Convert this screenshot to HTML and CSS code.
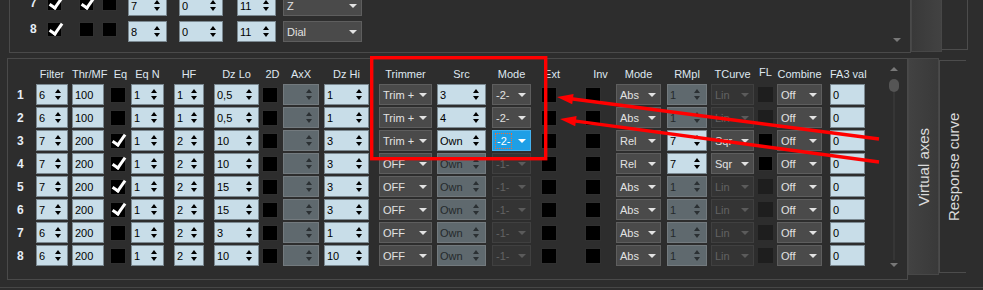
FILE: index.html
```html
<!DOCTYPE html>
<html lang="en">
<head>
  <meta charset="UTF-8">
  <meta name="viewport" content="width=device-width, initial-scale=1.0">
  <title>Axis settings</title>
  <link rel="stylesheet" href="styles.css">
</head>
<body>
  <!-- upper block, scrolled so only rows 7 and 8 show -->
  <div class="strip top">
    <div class="panel upper">
      <div class="ugrid">
        <div class="n">7</div>
        <div class="cb on"></div>
        <div class="cb on"></div>
        <div class="cb"></div>
        <div class="sp"><span>7</span><i class="ar"></i></div>
        <div class="sp"><span>0</span><i class="ar"></i></div>
        <div class="sp"><span>11</span><i class="ar"></i></div>
        <div class="dd"><span>Z</span><i class="dn"></i></div>

        <div class="n">8</div>
        <div class="cb on"></div>
        <div class="cb"></div>
        <div class="cb"></div>
        <div class="sp"><span>8</span><i class="ar"></i></div>
        <div class="sp"><span>0</span><i class="ar"></i></div>
        <div class="sp"><span>11</span><i class="ar"></i></div>
        <div class="dd"><span>Dial</span><i class="dn"></i></div>
      </div>
      <i class="down corner"></i>
    </div>
    <div class="tab lit short"></div>
    <div class="tab plain shorter"></div>
  </div>

  <!-- axis table -->
  <div class="strip bottom">
    <div class="panel lower">
      <div class="grid">
        <div></div>
        <div class="h">Filter</div>
        <div class="h">Thr/MF</div>
        <div class="h">Eq</div>
        <div class="h">Eq N</div>
        <div class="h">HF</div>
        <div class="h">Dz Lo</div>
        <div class="h">2D</div>
        <div class="h">AxX</div>
        <div class="h">Dz Hi</div>
        <div class="h">Trimmer</div>
        <div class="h">Src</div>
        <div class="h">Mode</div>
        <div class="h ext">Ext</div>
        <div class="h">Inv</div>
        <div class="h">Mode</div>
        <div class="h">RMpl</div>
        <div class="h">TCurve</div>
        <div class="h">FL</div>
        <div class="h">Combine</div>
        <div class="h">FA3 val</div>

        <!-- 1 -->
        <div class="n">1</div>
        <div class="sp"><span>6</span><i class="ar"></i></div>
        <div class="tx">100</div>
        <div class="cb"></div>
        <div class="sp"><span>1</span><i class="ar"></i></div>
        <div class="sp"><span>1</span><i class="ar"></i></div>
        <div class="sp"><span>0,5</span><i class="ar"></i></div>
        <div class="cb"></div>
        <div class="sp off"><span></span><i class="ar"></i></div>
        <div class="sp"><span>1</span><i class="ar"></i></div>
        <div class="dd"><span>Trim +</span><i class="dn"></i></div>
        <div class="sp"><span>3</span><i class="ar"></i></div>
        <div class="dd"><span>-2-</span><i class="dn"></i></div>
        <div class="cb"></div>
        <div class="cb"></div>
        <div class="dd"><span>Abs</span><i class="dn"></i></div>
        <div class="sp off"><span>1</span><i class="ar"></i></div>
        <div class="dd off"><span>Lin</span><i class="dn"></i></div>
        <div class="cb dim"></div>
        <div class="dd"><span>Off</span><i class="dn"></i></div>
        <div class="tx">0</div>

        <!-- 2 -->
        <div class="n">2</div>
        <div class="sp"><span>6</span><i class="ar"></i></div>
        <div class="tx">100</div>
        <div class="cb"></div>
        <div class="sp"><span>1</span><i class="ar"></i></div>
        <div class="sp"><span>1</span><i class="ar"></i></div>
        <div class="sp"><span>0,5</span><i class="ar"></i></div>
        <div class="cb"></div>
        <div class="sp off"><span></span><i class="ar"></i></div>
        <div class="sp"><span>1</span><i class="ar"></i></div>
        <div class="dd"><span>Trim +</span><i class="dn"></i></div>
        <div class="sp"><span>4</span><i class="ar"></i></div>
        <div class="dd"><span>-2-</span><i class="dn"></i></div>
        <div class="cb"></div>
        <div class="cb"></div>
        <div class="dd"><span>Abs</span><i class="dn"></i></div>
        <div class="sp off"><span>1</span><i class="ar"></i></div>
        <div class="dd off"><span>Lin</span><i class="dn"></i></div>
        <div class="cb dim"></div>
        <div class="dd"><span>Off</span><i class="dn"></i></div>
        <div class="tx">0</div>

        <!-- 3 -->
        <div class="n">3</div>
        <div class="sp"><span>7</span><i class="ar"></i></div>
        <div class="tx">200</div>
        <div class="cb on"></div>
        <div class="sp"><span>1</span><i class="ar"></i></div>
        <div class="sp"><span>2</span><i class="ar"></i></div>
        <div class="sp"><span>10</span><i class="ar"></i></div>
        <div class="cb"></div>
        <div class="sp off"><span></span><i class="ar"></i></div>
        <div class="sp"><span>3</span><i class="ar"></i></div>
        <div class="dd"><span>Trim +</span><i class="dn"></i></div>
        <div class="sp"><span>Own</span><i class="ar"></i></div>
        <div class="dd sel"><span>-2-</span><i class="dn"></i></div>
        <div class="cb"></div>
        <div class="cb"></div>
        <div class="dd"><span>Rel</span><i class="dn"></i></div>
        <div class="sp"><span>7</span><i class="ar"></i></div>
        <div class="dd"><span>Sqr</span><i class="dn"></i></div>
        <div class="cb"></div>
        <div class="dd"><span>Off</span><i class="dn"></i></div>
        <div class="tx">0</div>

        <!-- 4 -->
        <div class="n">4</div>
        <div class="sp"><span>7</span><i class="ar"></i></div>
        <div class="tx">200</div>
        <div class="cb on"></div>
        <div class="sp"><span>1</span><i class="ar"></i></div>
        <div class="sp"><span>2</span><i class="ar"></i></div>
        <div class="sp"><span>10</span><i class="ar"></i></div>
        <div class="cb"></div>
        <div class="sp off"><span></span><i class="ar"></i></div>
        <div class="sp"><span>3</span><i class="ar"></i></div>
        <div class="dd"><span>OFF</span><i class="dn"></i></div>
        <div class="sp off"><span>Own</span><i class="ar"></i></div>
        <div class="dd off"><span>-1-</span><i class="dn"></i></div>
        <div class="cb"></div>
        <div class="cb"></div>
        <div class="dd"><span>Rel</span><i class="dn"></i></div>
        <div class="sp"><span>7</span><i class="ar"></i></div>
        <div class="dd"><span>Sqr</span><i class="dn"></i></div>
        <div class="cb"></div>
        <div class="dd"><span>Off</span><i class="dn"></i></div>
        <div class="tx">0</div>

        <!-- 5 -->
        <div class="n">5</div>
        <div class="sp"><span>7</span><i class="ar"></i></div>
        <div class="tx">200</div>
        <div class="cb on"></div>
        <div class="sp"><span>1</span><i class="ar"></i></div>
        <div class="sp"><span>2</span><i class="ar"></i></div>
        <div class="sp"><span>15</span><i class="ar"></i></div>
        <div class="cb"></div>
        <div class="sp off"><span></span><i class="ar"></i></div>
        <div class="sp"><span>3</span><i class="ar"></i></div>
        <div class="dd"><span>OFF</span><i class="dn"></i></div>
        <div class="sp off"><span>Own</span><i class="ar"></i></div>
        <div class="dd off"><span>-1-</span><i class="dn"></i></div>
        <div class="cb"></div>
        <div class="cb"></div>
        <div class="dd"><span>Abs</span><i class="dn"></i></div>
        <div class="sp off"><span>1</span><i class="ar"></i></div>
        <div class="dd off"><span>Lin</span><i class="dn"></i></div>
        <div class="cb dim"></div>
        <div class="dd"><span>Off</span><i class="dn"></i></div>
        <div class="tx">0</div>

        <!-- 6 -->
        <div class="n">6</div>
        <div class="sp"><span>7</span><i class="ar"></i></div>
        <div class="tx">200</div>
        <div class="cb on"></div>
        <div class="sp"><span>1</span><i class="ar"></i></div>
        <div class="sp"><span>2</span><i class="ar"></i></div>
        <div class="sp"><span>15</span><i class="ar"></i></div>
        <div class="cb"></div>
        <div class="sp off"><span></span><i class="ar"></i></div>
        <div class="sp"><span>3</span><i class="ar"></i></div>
        <div class="dd"><span>OFF</span><i class="dn"></i></div>
        <div class="sp off"><span>Own</span><i class="ar"></i></div>
        <div class="dd off"><span>-1-</span><i class="dn"></i></div>
        <div class="cb"></div>
        <div class="cb"></div>
        <div class="dd"><span>Abs</span><i class="dn"></i></div>
        <div class="sp off"><span>1</span><i class="ar"></i></div>
        <div class="dd off"><span>Lin</span><i class="dn"></i></div>
        <div class="cb dim"></div>
        <div class="dd"><span>Off</span><i class="dn"></i></div>
        <div class="tx">0</div>

        <!-- 7 -->
        <div class="n">7</div>
        <div class="sp"><span>6</span><i class="ar"></i></div>
        <div class="tx">200</div>
        <div class="cb"></div>
        <div class="sp"><span>1</span><i class="ar"></i></div>
        <div class="sp"><span>2</span><i class="ar"></i></div>
        <div class="sp"><span>3</span><i class="ar"></i></div>
        <div class="cb"></div>
        <div class="sp off"><span></span><i class="ar"></i></div>
        <div class="sp"><span>1</span><i class="ar"></i></div>
        <div class="dd"><span>OFF</span><i class="dn"></i></div>
        <div class="sp off"><span>Own</span><i class="ar"></i></div>
        <div class="dd off"><span>-1-</span><i class="dn"></i></div>
        <div class="cb"></div>
        <div class="cb"></div>
        <div class="dd"><span>Abs</span><i class="dn"></i></div>
        <div class="sp off"><span>1</span><i class="ar"></i></div>
        <div class="dd off"><span>Lin</span><i class="dn"></i></div>
        <div class="cb dim"></div>
        <div class="dd"><span>Off</span><i class="dn"></i></div>
        <div class="tx">0</div>

        <!-- 8 -->
        <div class="n">8</div>
        <div class="sp"><span>6</span><i class="ar"></i></div>
        <div class="tx">200</div>
        <div class="cb"></div>
        <div class="sp"><span>1</span><i class="ar"></i></div>
        <div class="sp"><span>2</span><i class="ar"></i></div>
        <div class="sp"><span>10</span><i class="ar"></i></div>
        <div class="cb"></div>
        <div class="sp off"><span></span><i class="ar"></i></div>
        <div class="sp"><span>10</span><i class="ar"></i></div>
        <div class="dd"><span>OFF</span><i class="dn"></i></div>
        <div class="sp off"><span>Own</span><i class="ar"></i></div>
        <div class="dd off"><span>-1-</span><i class="dn"></i></div>
        <div class="cb"></div>
        <div class="cb"></div>
        <div class="dd"><span>Abs</span><i class="dn"></i></div>
        <div class="sp off"><span>1</span><i class="ar"></i></div>
        <div class="dd off"><span>Lin</span><i class="dn"></i></div>
        <div class="cb dim"></div>
        <div class="dd"><span>Off</span><i class="dn"></i></div>
        <div class="tx">0</div>
      </div>

      <div class="scroll">
        <i class="up"></i>
        <div class="thumb"></div>
        <div class="track"></div>
        <i class="down"></i>
      </div>
    </div>
    <div class="tab lit vtab">Virtual axes</div>
    <div class="tab plain vtab inset">Response curve</div>
  </div>

  <div class="base"></div>

  <!-- red annotation drawn over the screenshot -->
  <svg class="marks" width="983" height="290" viewBox="0 0 983 290">
    <rect x="371.7" y="57.7" width="174" height="101" fill="none" stroke="#ff0000" stroke-width="3.4"/>
    <line x1="879" y1="139" x2="571" y2="98.8" stroke="#ff0000" stroke-width="3.4"/>
    <polygon points="557,97 572.2,104.3 573.6,93.9" fill="#ff0000"/>
    <line x1="879" y1="162" x2="574" y2="120.9" stroke="#ff0000" stroke-width="3.4"/>
    <polygon points="560,119 575.2,126.3 576.6,115.9" fill="#ff0000"/>
  </svg>
</body>
</html>
```

FILE: styles.css
```css
html, body {
  margin: 0;
  padding: 0;
}
body {
  position: relative;
  width: 983px;
  height: 290px;
  overflow: hidden;
  background-color: #2d2d2d;
  font-family: "Liberation Sans", Arial, sans-serif;
  font-size: 11px;
  color: #e2e2e2;
}

/* strips: panel + vertical tabs */
.strip {
  display: flex;
  align-items: flex-start;
}
.top {
  padding-left: 9px;
  height: 53px;
}
.bottom {
  padding-left: 7px;
  margin-top: 5px;
}
.panel {
  box-sizing: border-box;
  display: flex;
  border: 1px solid #4a4a4a;
  overflow: hidden;
}
.upper {
  width: 902px;
  height: 53px;
  border-top: 0;
}
.lower {
  width: 901px;
  height: 222px;
}
.base {
  margin-top: 7px;
  border-top: 1px solid #464646;
}

/* tabs on the right */
.tab {
  box-sizing: border-box;
  border: 1px solid #4c4c4c;
}
.tab.lit {
  background: linear-gradient(to right, #393939, #424242);
  border-color: #474747;
}
.tab.plain {
  border-left: 0;
}
.top .tab {
  border-top: 0;
}
.top .lit {
  width: 31px;
  height: 52px;
}
.top .plain {
  width: 26px;
  height: 50px;
}
.vtab {
  display: flex;
  align-items: center;
  justify-content: center;
  writing-mode: vertical-rl;
  transform: rotate(180deg);
  font-size: 15px;
  color: #dadada;
  white-space: nowrap;
}
.bottom .lit {
  width: 31px;
  height: 217px;
}
.bottom .plain {
  width: 27px;
  height: 213px;
  margin-top: 2px;
}

/* upper rows */
.ugrid {
  display: grid;
  grid-template-columns: 37px 32px 23px 26px 51px 58px 46px 79px;
  grid-auto-rows: 21px;
  row-gap: 5px;
  align-items: start;
  margin-top: -5px;
}
.ugrid .n {
  padding: 1px 0 0 20px;
}
.ugrid .cb {
  width: 15px;
  height: 15px;
  margin-top: 1px;
}
.ugrid > :nth-child(8n+5),
.ugrid > :nth-child(8n+7) { width: 39px; }
.ugrid > :nth-child(8n+6) { width: 44px; }
.ugrid > :nth-child(8n+8) { width: 79px; }

/* axis table */
.grid {
  display: grid;
  grid-template-columns: 28px 36px 38px 21px 43px 40px 48px 21px 41px 55px 58px 55px 49px 44px 31px 51px 44px 47px 19px 53px 35px;
  grid-template-rows: 17px;
  grid-auto-rows: 21px;
  row-gap: 2px;
  align-items: center;
  padding-top: 6px;
}
.grid > :nth-child(21n+2),
.grid > :nth-child(21n+3) { width: 32px; }
.grid > :nth-child(21n+5) { width: 33px; }
.grid > :nth-child(21n+6) { width: 30px; }
.grid > :nth-child(21n+7),
.grid > :nth-child(21n+10),
.grid > :nth-child(21n+16),
.grid > :nth-child(21n+20) { width: 45px; }
.grid > :nth-child(21n+9) { width: 36px; }
.grid > :nth-child(21n+11) { width: 53px; }
.grid > :nth-child(21n+12) { width: 49px; }
.grid > :nth-child(21n+13) { width: 39px; }
.grid > :nth-child(21n+17) { width: 40px; }
.grid > :nth-child(21n+18) { width: 43px; }
.grid > :nth-child(21n+19) { width: 15px; height: 15px; }
.grid > :nth-child(21n+21) { width: 35px; }

.h {
  text-align: center;
  white-space: nowrap;
  color: #dfe7f0;
}
.h.ext {
  width: 22px;
}
.n {
  padding-left: 9px;
  font-size: 12px;
  font-weight: bold;
  color: #e6eef7;
}

/* spin boxes and text boxes */
.sp, .tx {
  box-sizing: border-box;
  height: 21px;
  display: flex;
  align-items: center;
  padding-left: 2px;
  background-color: #c8dde8;
  border: 1px solid #7b8991;
  color: #000;
}
.sp {
  justify-content: space-between;
}
.sp.off {
  background-color: #5f696e;
  border-color: #737a7e;
  color: #25292c;
}
.ar {
  display: flex;
  flex-direction: column;
  gap: 3px;
  margin-right: 6px;
}
.ar::before,
.ar::after {
  content: "";
  border-left: 3.5px solid transparent;
  border-right: 3.5px solid transparent;
}
.ar::before { border-bottom: 4px solid #000; }
.ar::after { border-top: 4px solid #000; }
.sp.off .ar::before { border-bottom-color: #2b3033; }
.sp.off .ar::after { border-top-color: #2b3033; }

/* drop downs */
.dd {
  box-sizing: border-box;
  height: 21px;
  display: flex;
  align-items: center;
  justify-content: space-between;
  padding: 0 4px 0 3px;
  background-color: #4a4a4a;
  border: 1px solid #5e5e5e;
  color: #e2e2e2;
  white-space: nowrap;
}
.dn {
  border-left: 4px solid transparent;
  border-right: 4px solid transparent;
  border-top: 4px solid #e2e2e2;
}
.dd.off {
  background-color: #343434;
  border-color: #404040;
  color: #636363;
}
.dd.off .dn { border-top-color: #5b5b5b; }
.dd.sel {
  padding-left: 2px;
  background-color: #1e9fe6;
  border-color: #45b1ee;
  color: #fff;
}
.dd.sel span {
  padding: 1px 1px;
  border: 1px dotted #e8703c;
}
.dd.sel .dn { border-top-color: #fff; }

/* check boxes */
.cb {
  box-sizing: border-box;
  width: 16px;
  height: 16px;
  display: flex;
  align-items: center;
  justify-content: center;
  background-color: #000;
  border: 1px solid #303030;
}
.cb.on::after {
  content: "";
  width: 5px;
  height: 11px;
  border: solid #fff;
  border-width: 0 3px 3px 0;
  transform: translate(1px, -2px) rotate(35deg);
}
.cb.dim {
  background-color: #1e1e1e;
  border-color: #1e1e1e;
}

/* scroll bar bits */
.scroll {
  width: 10px;
  margin: 8px 8px 12px auto;
  display: flex;
  flex-direction: column;
  align-items: center;
}
.up,
.down {
  border-left: 4px solid transparent;
  border-right: 4px solid transparent;
}
.up { border-bottom: 4px solid #787878; }
.down {
  margin-top: 3px;
  border-top: 4px solid #787878;
}
.down.corner {
  align-self: flex-end;
  margin: 0 9px 10px auto;
}
.thumb {
  width: 10px;
  height: 13px;
  margin-top: 8px;
  border-radius: 5px;
  background-color: #555;
}
.track {
  flex: 1;
  width: 2px;
  background-color: #363636;
}

.marks {
  position: absolute;
  top: 0;
  left: 0;
  pointer-events: none;
}
```
